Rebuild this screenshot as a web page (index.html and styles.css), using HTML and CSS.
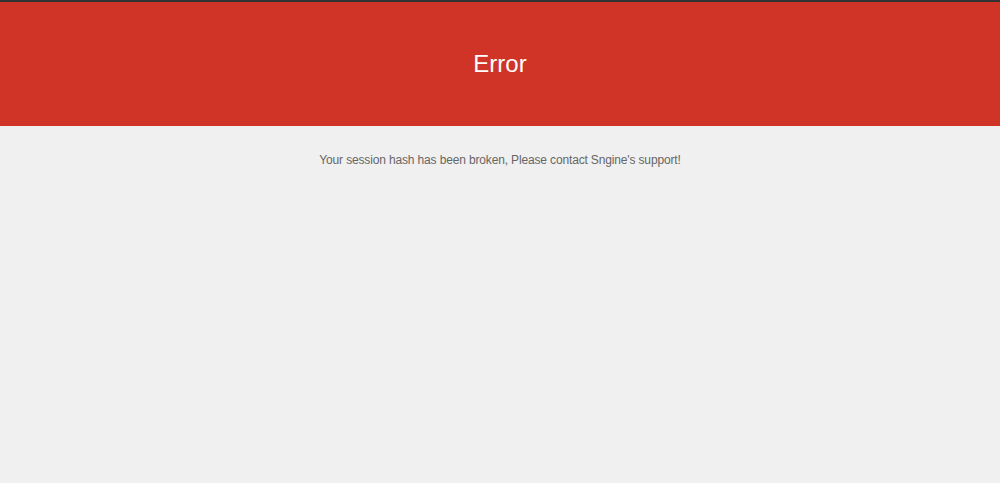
FILE: index.html
```html
<!DOCTYPE html>
<html>
<head>
<meta charset="utf-8">
<link rel="stylesheet" href="styles.css">
</head>
<body>
<div class="topline"></div>
<header class="header"><h1 class="title">Error</h1></header>
<main class="content"><p class="message">Your session hash has been broken, Please contact Sngine's support!</p></main>
</body>
</html>
```
FILE: styles.css
```css
html, body { margin: 0; padding: 0; }
body { background: #f0f0f0; font-family: "Liberation Sans", Arial, sans-serif; min-height: 483px; }
.topline { height: 2px; background: #333333; }
.header { height: 124px; background: #d03427; display: flex; align-items: center; justify-content: center; }
.title { margin: 0; color: #ffffff; font-weight: normal; font-size: 24px; line-height: 1; }
.content { padding-top: 26px; text-align: center; }
.message { margin: 0; color: #666666; font-size: 12px; line-height: 16px; letter-spacing: -0.15px; }
```
